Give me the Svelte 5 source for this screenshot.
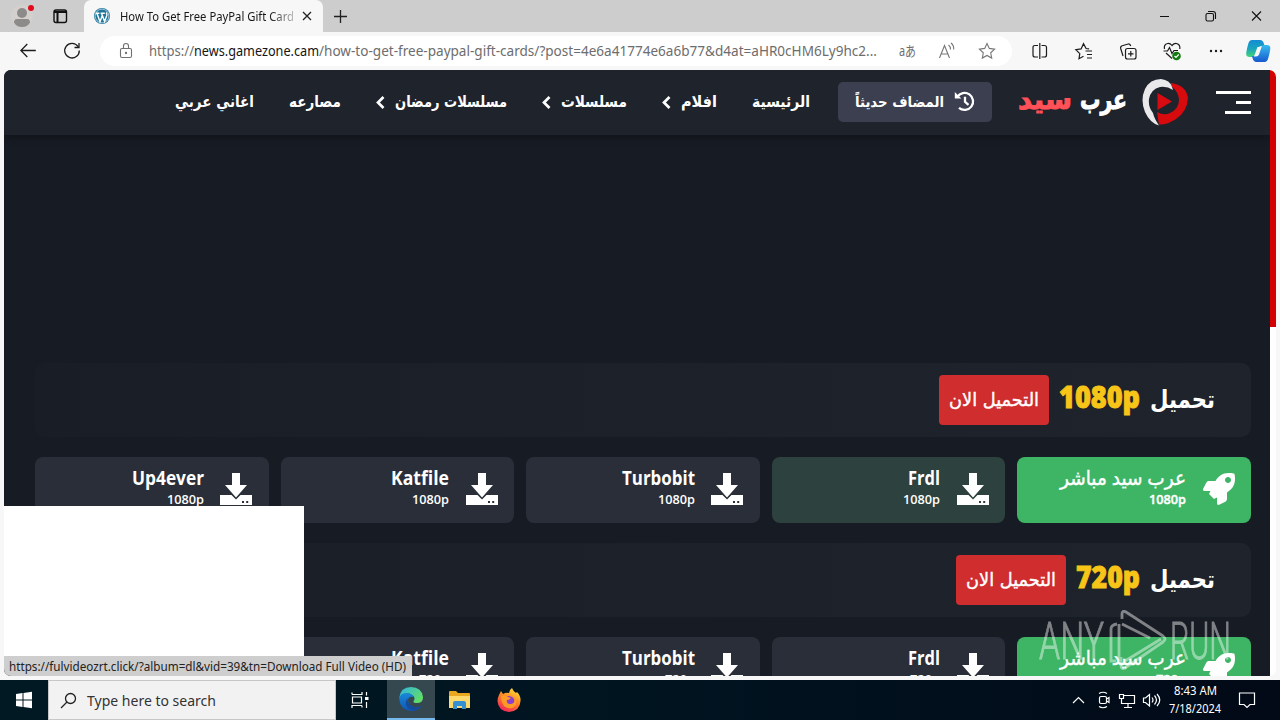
<script>
  const nav = [
    { text: 'الرئيسية', w: 58 },
    { text: 'افلام', w: 36, more: true },
    { text: 'مسلسلات', w: 66, more: true },
    { text: 'مسلسلات رمضان', w: 112, more: true },
    { text: 'مصارعه', w: 52 },
    { text: 'اغاني عربي', w: 79 }
  ];
  const hosts = [
    { name: 'عرب سيد مباشر', w: 126, direct: true },
    { name: 'Frdl', w: 32 },
    { name: 'Turbobit', w: 73 },
    { name: 'Katfile', w: 58 },
    { name: 'Up4ever', w: 72 }
  ];
  const sections = [
    { q: '1080p', w: 81, sub: 37, hot: true },
    { q: '720p', w: 64, sub: 30, hot: false }
  ];
</script>

{#snippet fit(text, w, size, h = 20, base = 15, cls = '')}
  <svg class="fit {cls}" width={w} height={h}>
    <text x="0" y={base} font-size={size} textLength={w} lengthAdjust="spacingAndGlyphs">{text}</text>
  </svg>
{/snippet}

<div class="screen">
  <div class="tabs">
    <svg class="profile" width="84" height="32" viewBox="0 0 84 32">
      <circle cx="22" cy="16" r="11" fill="#d3d0ce" />
      <circle cx="22" cy="13" r="5" fill="#8d8b89" />
      <path d="M14 22.5q0-3.500 3-3.500h10q3 0 3 3.500-2.500 4.500-8 4.500t-8-4.500z" fill="#8d8b89" />
      <circle cx="31" cy="8" r="3" fill="#e00b1c" />
      <rect x="54" y="10" width="12.500" height="12.500" rx="2" fill="none" stroke="#111" stroke-width="1.400" />
      <path d="M54 12h12.500M57.500 12v10" stroke="#111" stroke-width="2" />
    </svg>
    <div class="tab">
      <svg width="16" height="16" viewBox="0 0 16 16">
        <circle cx="8" cy="8" r="8" fill="#21759b" />
        <circle cx="8" cy="8" r="6.900" fill="none" stroke="#d8e9f1" stroke-width=".7" />
        <path d="M1.800 5.300h3.600M6.600 5.300h4.200M3 5.500l3 8.200 2.200-6M7.600 5.500l3 8 2.200-6q.5-1.600-.7-3" fill="none" stroke="#fff" stroke-width="1.400" />
      </svg>
      <span class="tabtitle">{@render fit('How To Get Free PayPal Gift Card', 174, 12)}</span>
      <svg width="10" height="10" viewBox="0 0 10 10"><path d="M1 1l8 8M9 1l-8 8" stroke="#222" stroke-width="1.300" /></svg>
    </div>
    <svg class="plus" width="15" height="15" viewBox="0 0 15 15"><path d="M7.500 1v13M1 7.500h13" stroke="#222" stroke-width="1.300" /></svg>
    <svg class="winctl" width="106" height="16" viewBox="0 0 106 16" fill="none" stroke="#111" stroke-width="1.100">
      <path d="M1 8.500h9M93 3.500l9 9M102 3.500l-9 9" />
      <rect x="47" y="5.500" width="7.500" height="7.500" rx="1.500" />
      <path d="M49 3.500h5q2.500 0 2.500 2.500v5" />
    </svg>
  </div>

  <div class="toolbar">
    <svg width="80" height="24" viewBox="0 0 80 24" class="navbtns" fill="none" stroke="#1c1c1c" stroke-width="1.300">
      <path d="M15.800 11.500H.8M7.300 5L.8 11.500 7.300 18" />
      <path d="M58 7.500A7.300 7.300 0 1 0 59.300 11.500M59 4v4.500h-4.500" />
    </svg>
    <div class="address">
      <svg width="14" height="18" viewBox="0 0 14 18" fill="none" stroke="#707070" stroke-width="1.100">
        <rect x="1.500" y="6.500" width="11" height="9" rx="1.500" /><path d="M4.500 6.500V4a2.500 2.500 0 0 1 5 0v2.500" /><circle cx="7" cy="11" r=".6" fill="#555" />
      </svg>
      <div class="url">
        {@render fit('https://', 45, 14)}
        {@render fit('news.gamezone.cam', 125, 14, 20, 15, 'host')}
        {@render fit('/how-to-get-free-paypal-gift-cards/?post=4e6a41774e6a6b77&d4at=aHR0cHM6Ly9hc2...', 558, 14)}
      </div>
      <span class="translate">{@render fit('aあ', 17, 14)}</span>
      <svg class="read" width="18" height="18" viewBox="0 0 18 18" fill="none" stroke="#777" stroke-width="1.100">
        <path d="M1.500 16L6.500 3.500 11.500 16M3.200 12h6.600M10.500 3q2.300 1.800 2 4.500M13 1q3 2.300 2.700 6.500" />
      </svg>
      <svg class="star" width="18" height="18" viewBox="0 0 18 18" fill="none" stroke="#777" stroke-width="1.100">
        <path d="M9 1.500l2.300 4.900 5.300.7-3.900 3.700 1 5.300L9 13.500l-4.700 2.600 1-5.300L1.400 7.100l5.300-.7z" />
      </svg>
    </div>
    <svg class="tools" width="248" height="26" viewBox="0 0 248 26" fill="none" stroke="#1c1c1c" stroke-width="1.200">
      <path d="M13 7.500h-3q-2 0-2 2v7.500q0 2 2 2h3M16.500 7.500h3q2 0 2 2v7.500q0 2-2 2h-3M14.800 5v16" />
      <path d="M58.500 18.200l-4.500 2.500.8-5-4-4 5.300-.8 2.400-5.200 2.600 4.800 3 .4M60.500 13h6.500M62 16.500h5M62 20h5" />
      <rect x="100.500" y="10.500" width="10.500" height="10.500" rx="2" />
      <path d="M105.800 13v5.500M103 15.800h5.500M98 18l-2.300-7.500q-.5-2 1.500-2.700l6-1.800q2-.3 2.500 2" />
      <path d="M139.500 11q-1-4.500 3.200-5.500 2.500-.3 4.300 2 2-2.300 4.500-2 4 1 3.300 5.500M138.500 13h4l2-3.500 2.500 6 2-3h4M141 15l6 5.500" />
      <circle cx="151.500" cy="18" r="4.300" fill="#107c10" stroke="none" /><path d="M149.500 18l1.500 1.500 2.700-3" stroke="#fff" />
      <g fill="#1c1c1c" stroke="none"><circle cx="186" cy="13" r="1.200" /><circle cx="191" cy="13" r="1.200" /><circle cx="196" cy="13" r="1.200" /></g>
      <g stroke="none">
        <path d="M227 2h8q3 0 4 4l.7 2h-3q-3 0-4 3l-2 5q-1 3-4 3h-2q-4 0-3.500-4 .8-5 2-9 1-4 3.800-4z" fill="url(#cpa)" />
        <path d="M239.500 24h-8q-3 0-4-4l-.7-2h3q3 0 4-3l2-5q1-3 4-3h2q4 0 3.500 4-.8 5-2 9-1 4-3.800 4z" fill="url(#cpb)" />
        <path d="M232.500 9h4l-2.500 7.500q-.7 2-3 2h-2z" fill="#f7f7f7" />
      </g>
      <defs>
        <linearGradient id="cpa" x2="0" y2="1"><stop stop-color="#168bd6" /><stop offset=".5" stop-color="#19a5bd" /><stop offset="1" stop-color="#45d477" /></linearGradient>
        <linearGradient id="cpb" x2="0" y2="1"><stop stop-color="#38bdee" /><stop offset="1" stop-color="#1759cf" /></linearGradient>
      </defs>
    </svg>
  </div>

  <div class="viewport">
    <main dir="rtl">
      <header>
        <svg width="35" height="24" viewBox="0 0 35 24" fill="#fff"><rect y="1" width="35" height="3" /><rect x="20" y="11" width="15" height="3" /><rect x="9" y="21" width="26" height="3" /></svg>
        <svg class="logo" width="46" height="48" viewBox="0 0 46 48">
          <path d="M29 5Q44 7 46 20 45 34 34 41 25 47 17 46.500L15 34Q22 38 28 35 37 31 37 21 36 13 29 8z" fill="#d70b0e" />
          <path d="M30 9Q28 2 19 1 8 1 3 11-2 22 3 34 8 45 17 47.500 12 40 11 35 6 29 7 21 9 11 18 9 25 8 31 12z" fill="#e9e9eb" />
          <path d="M15.500 15v17L30 23.500z" fill="#d90b10" />
        </svg>
        <div class="brand">
          {@render fit('عرب', 47, 27, 40, 27)}
          {@render fit('سيد', 54, 27, 40, 27, 'coral')}
        </div>
        <div class="recent">
          <svg width="21" height="21" viewBox="0 0 21 21" fill="none" stroke="#fff" stroke-width="2.300">
            <path d="M3.300 6A8.500 8.500 0 1 1 5 16.800M11 5.800v5l3.500 3" /><path d="M.8 1v6.500h6.500z" fill="#fff" stroke="none" />
          </svg>
          {@render fit('المضاف حديثاً', 89, 15, 24, 17)}
        </div>
        <nav>
          {#each nav as n}
            <span>
              {@render fit(n.text, n.w, 16, 24, 17)}
              {#if n.more}<svg width="9" height="14" viewBox="0 0 9 14"><path d="M7.500 2L2 7.500l5.500 5.500" fill="none" stroke="#fff" stroke-width="2.700" /></svg>{/if}
            </span>
          {/each}
        </nav>
      </header>

      <div class="downloads">
        {#each sections as s}
          <section>
            <h2>
              {@render fit('تحميل', 65, 25, 40, 28)}
              {@render fit(s.q, s.w, 30, 40, 28, 'quality')}
              <span class="now">{@render fit('التحميل الان', 90, 18, 30, 21)}</span>
            </h2>
            <div class="cards">
              {#each hosts as h, i}
                <div class="card" class:direct={h.direct} class:hot={s.hot && i === 1}>
                  {#if h.direct}
                    <svg width="32" height="32" viewBox="0 0 512 512" fill="#fff"><path d="M505.100 19.100C503.800 13 499 8.200 492.900 6.900 460.700 0 435.500 0 410.400 0 307.200 0 245.300 55.200 199.100 128H94.900c-18.200 0-34.800 10.300-42.900 26.500L2.600 253.300c-8 16 3.600 34.700 21.500 34.700h95.100c-5.900 12.800-11.900 25.500-18 37.700-3.100 6.200-1.900 13.600 3 18.500l63.600 63.600c4.900 4.900 12.300 6.100 18.500 3 12.200-6.100 24.900-12 37.700-17.900V488c0 17.800 18.800 29.400 34.700 21.500l98.700-49.400c16.300-8.100 26.500-24.800 26.500-42.900V312.800c72.600-46.200 128-108.400 128-211.100.1-25.200.1-50.400-6.800-82.600zM400 160c-26.500 0-48-21.500-48-48s21.500-48 48-48 48 21.500 48 48-21.500 48-48 48z" /></svg>
                  {:else}
                    <svg width="32" height="32" viewBox="0 0 32 32" fill="#fff"><path d="M12 0h8v12h7L16 24.500 5 12h7z" /><path fill-rule="evenodd" d="M0 22h11.500l4.500 4.500 4.500-4.500H32v10H0zM22 28h2v2h-2zM26.200 28h2v2h-2z" /></svg>
                  {/if}
                  <div class="names">
                    {@render fit(h.name, h.w, h.direct ? 20 : 19, 26, 18)}
                    {@render fit(s.q, s.sub, 13, 16, 11, 'sub')}
                  </div>
                </div>
              {/each}
            </div>
          </section>
        {/each}
      </div>
    </main>
    <div class="scroll"><i></i></div>
    <div class="popup"></div>
    <div class="status">{@render fit('https://fulvideozrt.click/?album=dl&vid=39&tn=Download Full Video (HD)', 397, 12)}</div>
  </div>

  <svg class="watermark" width="196" height="64" viewBox="0 0 196 64">
    <g font-size="51" stroke="#fff" stroke-width=".8">
      <text x="1" y="49" textLength="65" lengthAdjust="spacingAndGlyphs">ANY</text>
      <text x="132" y="49" textLength="61" lengthAdjust="spacingAndGlyphs">RUN</text>
    </g>
    <path d="M78 51h-5V19q0-4 6-5M81 51V14M84 9v-5q0-4 4-2l37 24q4 3 0 6L87 58q-4 2-4-3v-8M84 14l28 14M87 51l36-22" fill="none" stroke="#fff" stroke-width="2.800" />
  </svg>

  <div class="taskbar">
    <svg class="start" width="48" height="40" viewBox="0 0 48 40" fill="#fff"><path d="M16 14l6.500-1v6.500H16zM23.500 12.900L32 11.700v7.800h-8.500zM16 20.500h6.500V27L16 26zM23.500 20.500H32v7.800l-8.500-1.200z" /></svg>
    <div class="search">
      <svg width="17" height="17" viewBox="0 0 17 17" fill="none" stroke="#222" stroke-width="1.300"><circle cx="10.500" cy="6.500" r="5" /><path d="M7 10l-6 6" /></svg>
      {@render fit('Type here to search', 129, 15, 20, 16)}
    </div>
    <svg class="task" width="51" height="40" viewBox="0 0 51 40" fill="none" stroke="#fff" stroke-width="1.200"><path d="M16 14.500v-2M26 12v2.500H16M26 25.500v2M16 28v-2.500h10M16.500 17h9v6h-9zM30.500 12v3.500M30.500 22v6" /><path d="M29 18.500h3.500" stroke-width="3" /></svg>
    <div class="edge">
      <svg width="24" height="24" viewBox="0 0 24 24">
        <defs><linearGradient id="eg" y2=".6"><stop stop-color="#2db4e7" /><stop offset="1" stop-color="#62dc68" /></linearGradient><linearGradient id="eb" x2="0" y2="1"><stop stop-color="#178adc" /><stop offset="1" stop-color="#1155ac" /></linearGradient></defs>
        <path d="M.2 11Q1.500 0 12 0q11 .5 12 10 .2 6-6 6-4 0-3.500-2 2-2 0-5-4-4-9-2-4 2-5.300 4z" fill="url(#eg)" />
        <path d="M.2 12Q1 6 7 6q6 0 7.500 4-5-1.500-5.500 3 0 5 5 7 4 1.500 8.500-1-4 5-10.500 5Q1 23 .2 12z" fill="url(#eb)" />
        <path d="M8.500 11q-4 6 1 10.500l4 2Q20 23 22.500 19q-5 2.500-10 0-4.500-3-4-8z" fill="#134c9c" />
      </svg>
    </div>
    <svg class="folder" width="22" height="20" viewBox="0 0 22 20"><path d="M0 2q0-1 1-1h6l2 2h11q1 0 1 1v14H0z" fill="#e9a820" /><path d="M0 6h21v12H0z" fill="#ffd96b" /><path d="M4 19v-6q0-2 2-2h9q2 0 2 2v6h-4v-3H8v3z" fill="#3591d1" /></svg>
    <svg class="fox" width="24" height="24" viewBox="0 0 24 24">
      <defs><linearGradient id="ff" x1=".8" x2=".3" y2="1"><stop stop-color="#ffe23e" /><stop offset=".45" stop-color="#ff8b22" /><stop offset="1" stop-color="#f1235c" /></linearGradient></defs>
      <path d="M2 7l2-4 2 3q3-2 6-1 0-3 3-5 1 3 4 5l1-1q4 4 3.500 9Q23 23 12 24 1 23 .5 13q0-3 1.500-6z" fill="url(#ff)" /><circle cx="12" cy="13.500" r="5.500" fill="#8b3fd0" /><path d="M4 8q4-2 7 1l3 1q-2 2-4 2-1 4 4 4 5-1 3-7 5 6 0 10-5 3-10-1-3-4-3-10z" fill="#ff9a27" />
    </svg>
    <svg class="tray" width="92" height="24" viewBox="0 0 92 24" fill="none" stroke="#fff" stroke-width="1.200">
      <path d="M3 15l5.500-5.500L14 15" />
      <rect x="29.500" y="8.500" width="7" height="7" rx="1.500" /><path d="M36.500 11l2.500-1.500v5L36.500 13M29 5.500q4-2.500 8 0M29 18.500q4 2.500 8 0" />
      <path d="M54 7.500h10.500v8H51.500V12M58 15.500v3.500M54 19.500h8M49.500 6.500h4v4h-4zM51.500 10.500v4" />
      <path d="M73.500 10v4.500h2l4 3.500V6.500l-4 3.500zM82 9.500q2 2.500 0 5M84.500 7.500q4 4.500 0 9M87 6q5.500 6 0 12" />
    </svg>
    <div class="clock">
      {@render fit('8:43 AM', 43, 12, 18, 13)}
      {@render fit('7/18/2024', 52, 12, 18, 13)}
    </div>
    <svg class="note" width="18" height="18" viewBox="0 0 18 18" fill="none" stroke="#fff" stroke-width="1.200"><path d="M1.500 2h15v11.500H12L9 16.500l-3-3H1.500z" /></svg>
  </div>
</div>

<style>
  :global(body) { margin: 0; overflow: hidden; }
  .screen { position: relative; width: 1280px; height: 720px; overflow: hidden; display: flex; flex-direction: column; background: #f7f7f7; font-family: "Noto Sans", "Open Sans", "Noto Sans CJK JP", sans-serif; }
  svg { display: block; flex: none; }
  .fit { overflow: visible; direction: ltr; fill: currentColor; white-space: pre; }
  .tabs { height: 32px; flex: none; background: #cdcdcd; display: flex; align-items: center; }
  .tab { box-sizing: border-box; width: 239px; height: 32px; background: #f7f7f7; border-radius: 7px 7px 0 0; display: flex; align-items: center; padding-left: 10px; }
  .tabtitle { margin: 0 8px 0 10px; color: #171717; -webkit-mask-image: linear-gradient(90deg, #000 86%, #0004); mask-image: linear-gradient(90deg, #000 86%, #0004); }
  .plus { margin-left: 10px; }
  .winctl { margin-left: auto; margin-right: 15px; }
  .toolbar { height: 38px; flex: none; display: flex; align-items: center; }
  .navbtns { margin-left: 20px; }
  .address { box-sizing: border-box; width: 912px; height: 30px; border-radius: 15px; background: #fff; display: flex; align-items: center; padding-left: 19px; color: #6d6d6d; }
  .url { display: flex; margin-left: 16px; }
  .url :global(.host) { color: #151515; }
  .translate { margin-left: 22px; }
  .read { margin-left: 22px; }
  .star { margin-left: 22px; }
  .tools { margin-left: 13px; }

  .viewport { position: relative; height: 606px; margin: 0 4px; border-radius: 7px; overflow: hidden; display: flex; flex: none; }
  main { width: 1266px; background: #171b23; color: #fff; font-family: "DejaVu Sans", sans-serif; font-weight: 700; flex: none; }
  header { box-sizing: border-box; height: 65px; padding: 0 19px 2px 0; background: #1f232c; display: flex; align-items: center; box-shadow: 0 2px 8px #0005; }
  .logo { margin-right: 28px; }
  .brand { display: flex; gap: 8px; margin-right: 15px; stroke: #fff; stroke-width: 1px; }
  .brand :global(.coral) { color: #ff5157; stroke: #ff5157; }
  .recent { box-sizing: border-box; width: 154px; height: 40px; margin: 0 26px 0 28px; padding-right: 17px; border-radius: 5px; background: #3b3f4f; display: flex; align-items: center; gap: 10px; }
  nav { display: flex; gap: 35px; }
  nav span { display: flex; align-items: center; gap: 10px; }
  .downloads { padding: 228px 19px 0 31px; display: flex; flex-direction: column; gap: 20px; }
  h2 { box-sizing: border-box; height: 74px; margin: 0 0 20px; padding-right: 36px; border-radius: 10px; background: linear-gradient(270deg, #1f232c, #1c2028 60%, #191d25); display: flex; align-items: center; gap: 10px; }
  h2 :global(.quality) { color: #f7c518; stroke: #f7c518; stroke-width: .9px; font-family: "Open Sans", "Noto Sans", sans-serif; font-weight: 800; }
  .now { width: 110px; height: 50px; border-radius: 4px; background: #d02d2f; display: grid; place-items: center; font-weight: 400; stroke: #fff; stroke-width: .4px; }
  .cards { display: grid; grid-template-columns: repeat(5, 1fr); gap: 12px; }
  .card { box-sizing: border-box; height: 66px; border-radius: 8px; background: #2a2e38; display: flex; gap: 16.5px; padding: 16px 16.5px 0 0; }
  .card.hot { background: #2d413e; }
  .card.direct { background: #3db565; gap: 17px; padding-right: 16px; }
  .names { display: flex; flex-direction: column; margin-top: -6px; font-family: "Open Sans", "DejaVu Sans", sans-serif; }
  .names :global(.sub) { font-weight: 600; }
  .direct .names { font-weight: 400; stroke: #fff; stroke-width: .4px; }
  .scroll { width: 6px; background: #fff; }
  .scroll i { display: block; height: 257px; background: #d20000; }
  .popup { position: absolute; left: 0; top: 436px; width: 300px; height: 150px; background: #fff; }
  .status { position: absolute; left: 0; bottom: 0; box-sizing: border-box; width: 408px; height: 20px; padding-left: 5px; background: #cecece; color: #222; }
  .watermark { position: absolute; left: 1038px; top: 610px; opacity: .45; fill: #fff; font-family: Roboto, sans-serif; font-weight: 300; }

  .taskbar { height: 40px; margin-top: 4px; flex: none; display: flex; align-items: center; background: linear-gradient(90deg, #001922, #001420 50%, #020917); color: #fff; }
  .search { box-sizing: border-box; width: 288px; height: 40px; border: 1px solid #c7c7c7; background: #f2f2f2; color: #333; display: flex; align-items: center; gap: 10px; padding-left: 11px; }
  .edge { width: 48px; height: 38px; background: #35474f; border-bottom: 2px solid #76b9ed; display: grid; place-items: center; }
  .folder { margin-left: 14px; }
  .fox { margin-left: 26px; }
  .tray { margin-left: auto; margin-right: 6px; }
  .clock { width: 54px; display: flex; flex-direction: column; align-items: center; }
  .note { margin: 0 24px 0 16px; }
</style>
